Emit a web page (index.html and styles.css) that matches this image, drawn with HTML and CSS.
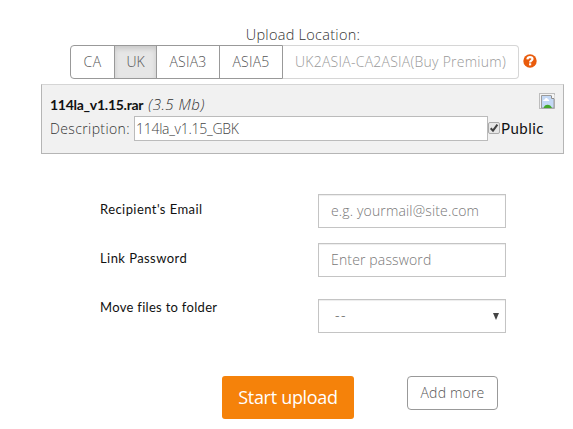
FILE: index.html
```html
<!DOCTYPE html>
<html lang="en">
<head>
    <meta charset="UTF-8">
    <meta name="viewport" content="width=device-width, initial-scale=1.0">
    <title>Upload files</title>
    <link rel="stylesheet" href="styles.css">
</head>
<body>
    <form class="upload-form">
        <div class="location">
            <div class="location-title">Upload Location:</div>
            <div class="location-row">
                <div class="btn-group">
                    <button type="button" class="btn btn-ca">CA</button>
                    <button type="button" class="btn btn-uk active">UK</button>
                    <button type="button" class="btn btn-asia">ASIA3</button>
                    <button type="button" class="btn btn-asia">ASIA5</button>
                    <button type="button" class="btn btn-premium" disabled>UK2ASIA-CA2ASIA(Buy Premium)</button>
                </div>
                <svg class="help-icon" width="14" height="14" viewBox="0 0 14 14">
                    <circle cx="7" cy="7" r="6.700" fill="#e95b0c"/>
                    <path d="M4.400 5.300C4.600 3.800 5.700 3.200 7 3.200c1.500 0 2.500.8 2.500 1.900 0 1.600-2.400 1.500-2.400 3.400" fill="none" stroke="#fff" stroke-width="2.200"/>
                    <rect x="6" y="9.300" width="2.200" height="2.100" fill="#fff"/>
                </svg>
            </div>
        </div>

        <div class="file-item">
            <div class="file-head">
                <div><span class="file-name">114la_v1.15.rar</span><span class="file-size">(3.5 Mb)</span></div>
                <svg class="delete-icon" width="16" height="16" viewBox="0 0 16 16">
                    <rect x=".5" y=".5" width="15" height="15" fill="#f4f4f4" stroke="#bdbdbd"/>
                    <path d="M2.5 15V2.5h9.5l3 3V15z" fill="#c3d8f5" stroke="#9b9b9b"/>
                    <path d="M12 2v4h3.5V2z" fill="#f5f5f5"/>
                    <path d="M12.500 2.500v3h2.500" fill="none" stroke="#8c8c8c"/>
                    <path d="M4 8c0-1.500 1.500-1.500 1.800-1.500C6 4.500 8.500 4.500 8.800 6.300 10 6.300 10.200 7 10.200 8z" fill="#fff"/>
                    <path d="M4.500 15c1-4.500 7-4.500 8.500 0z" fill="#43a829"/>
                </svg>
            </div>
            <div class="file-descr">
                <label for="descr" class="descr-label">Description:</label>
                <input type="text" id="descr" class="descr-input" value="114la_v1.15_GBK">
                <svg class="check" width="12" height="12" viewBox="0 0 12 12">
                    <rect x=".5" y=".5" width="11" height="11" rx="1.500" fill="#e6e6e6" stroke="#aaa"/>
                    <path d="M2.700 6.200l2.300 2.500 4.400-6" fill="none" stroke="#404040" stroke-width="2"/>
                </svg>
                <span class="public-label">Public</span>
            </div>
        </div>

        <div class="options">
            <div class="form-row">
                <label for="email">Recipient's Email</label>
                <input type="text" id="email" class="form-control" placeholder="e.g. yourmail@site.com">
            </div>
            <div class="form-row">
                <label for="pass">Link Password</label>
                <input type="text" id="pass" class="form-control" placeholder="Enter password">
            </div>
            <div class="form-row folder-row">
                <label for="folder">Move files to folder</label>
                <div id="folder" class="form-control select">
                    <span>--</span>
                    <svg width="6" height="7" viewBox="0 0 6 7"><path d="M0 0h6L3 7z" fill="#444"/></svg>
                </div>
            </div>
        </div>

        <div class="actions">
            <button type="button" class="btn-start">Start upload</button>
            <button type="button" class="btn btn-add">Add more</button>
        </div>
    </form>
</body>
</html>
```
FILE: styles.css
```css
* {
    margin: 0;
    padding: 0;
    box-sizing: border-box;
}

body {
    width: 573px;
    height: 429px;
    overflow: hidden;
    background: #fff;
    color: #333;
    font-family: 'Open Sans', 'Noto Sans', sans-serif;
    font-weight: 300;
    font-size: 14px;
}

button,
input {
    font: inherit;
    outline: none;
}

svg {
    display: block;
    flex: none;
}

.upload-form {
    padding: 24px 0 0 41px;
}

.location-title {
    width: 524px;
    height: 21px;
    line-height: 21px;
    text-align: center;
    font-size: 14.5px;
    letter-spacing: 0.28px;
}

.location-row {
    display: flex;
    align-items: center;
    padding-left: 29px;
    gap: 4px;
}

.help-icon {
    margin-bottom: 2px;
}

.btn-group {
    display: flex;
}

.btn {
    height: 34px;
    padding-bottom: 2px;
    border: 1px solid #999;
    background: #fff;
    color: #555;
    white-space: nowrap;
}

.btn-group .btn + .btn {
    margin-left: -1px;
}

.btn-group .btn:first-child {
    border-radius: 4px 0 0 4px;
}

.btn-group .btn:last-child {
    border-radius: 0 4px 4px 0;
}

.btn-ca {
    width: 45px;
    letter-spacing: 0.5px;
}

.btn-uk {
    width: 43px;
}

.btn-asia {
    width: 64px;
    letter-spacing: 0.2px;
}

.btn-group .active {
    background: #e6e6e6;
    box-shadow: inset 0 3px 5px rgba(0, 0, 0, 0.125);
}

.btn-premium {
    width: 237px;
    color: #999;
    border-color: #d6d6d6;
    border-left-color: #999;
    letter-spacing: 0.25px;
}

.file-item {
    width: 523px;
    height: 70px;
    margin-top: 5px;
    padding: 8px 8px 0 8px;
    background: #f1f1f1;
    border: 1px solid #b5b5b5;
    border-top-color: #d5d5d5;
}

.file-head {
    display: flex;
    justify-content: space-between;
    height: 23px;
    line-height: 22px;
}

.file-name {
    font-family: Lato, sans-serif;
    font-weight: 700;
    font-size: 14px;
    letter-spacing: -0.27px;
    color: #111;
    margin-right: 5px;
}

.file-size {
    font-size: 15px;
    font-style: italic;
    letter-spacing: 0.5px;
}

.file-descr {
    display: flex;
    align-items: center;
    height: 25px;
}

.descr-label {
    width: 84px;
    white-space: nowrap;
    letter-spacing: 0.38px;
}

.descr-input {
    width: 354px;
    height: 25px;
    padding: 0 1px;
    border: 1px solid #bbb;
    background: #fff;
    color: #444;
    letter-spacing: -0.28px;
}

.public-label {
    margin: 0 0 2px 1px;
    font-family: Lato, sans-serif;
    font-weight: 400;
    font-size: 15px;
    letter-spacing: 0.5px;
    color: #111;
}

.check {
    margin-bottom: 2px;
}

.options {
    padding: 40px 0 0 59px;
}

.form-row {
    display: flex;
    height: 34px;
    margin-bottom: 15px;
}

.form-row label {
    width: 218px;
    line-height: 31px;
    font-family: Lato, sans-serif;
    font-weight: 400;
    font-size: 13px;
    letter-spacing: 0.43px;
    color: #111;
}

.folder-row label {
    line-height: 17px;
    letter-spacing: 0.3px;
}

.form-control {
    width: 188px;
    height: 34px;
    padding: 0 12px 2px;
    border: 1px solid #c4c4c4;
    background: #fff;
    box-shadow: inset 0 1px 1px rgba(0, 0, 0, 0.075);
    color: #555;
    letter-spacing: 0.15px;
}

.form-control::placeholder {
    color: #777;
    opacity: 1;
}

.folder-row {
    margin-top: 22px;
}

.select {
    display: flex;
    align-items: center;
    justify-content: space-between;
    padding: 0 6px 0 16px;
    letter-spacing: 1.5px;
}

.select span {
    padding-bottom: 3px;
}

.actions {
    display: flex;
    align-items: flex-start;
    gap: 53px;
    padding: 28px 0 0 181px;
}

.btn-start {
    width: 132px;
    height: 43px;
    padding-bottom: 2px;
    border: none;
    border-radius: 3px;
    background: #f5820a;
    color: #fff;
    font-size: 18px;
    font-weight: 400;
    letter-spacing: -0.3px;
}

.btn-add {
    width: 91px;
    border-radius: 4px;
    letter-spacing: 0.2px;
}
```
